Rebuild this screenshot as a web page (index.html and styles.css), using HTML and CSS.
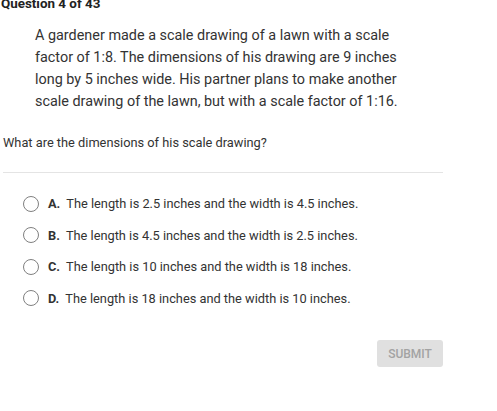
FILE: index.html
```html
<!DOCTYPE html>
<html>
<head>
<meta charset="utf-8">
<link rel="stylesheet" href="styles.css">
</head>
<body>
<div class="page">
  <div class="header">Question 4 of 43</div>
  <p class="passage">A gardener made a scale drawing of a lawn with a scale factor of 1:8. The dimensions of his drawing are 9 inches long by 5 inches wide. His partner plans to make another scale drawing of the lawn, but with a scale factor of 1:16.</p>
  <p class="question">What are the dimensions of his scale drawing?</p>
  <div class="divider"></div>
  <ul class="options">
    <li class="option"><span class="radio"></span><span class="letter">A.</span><span class="text">The length is 2.5 inches and the width is 4.5 inches.</span></li>
    <li class="option"><span class="radio"></span><span class="letter">B.</span><span class="text">The length is 4.5 inches and the width is 2.5 inches.</span></li>
    <li class="option"><span class="radio"></span><span class="letter">C.</span><span class="text">The length is 10 inches and the width is 18 inches.</span></li>
    <li class="option"><span class="radio"></span><span class="letter">D.</span><span class="text">The length is 18 inches and the width is 10 inches.</span></li>
  </ul>
  <div class="actions"><button class="submit">SUBMIT</button></div>
</div>
</body>
</html>
```
FILE: styles.css
```css
html, body {
  margin: 0;
  padding: 0;
  background: #fff;
}
body {
  font-family: Roboto, "Liberation Sans", sans-serif;
  color: #333;
}
.page {
  width: 440px;
  padding-left: 3px;
}
.header {
  font-weight: bold;
  font-size: 13.4px;
  line-height: 16px;
  margin-top: -4px;
  margin-left: -2px;
  color: #222;
}
.passage {
  margin: 13px 0 0 32px;
  width: 370px;
  font-size: 14.4px;
  line-height: 22px;
  color: #333;
}
.question {
  margin: 22px 0 0 0;
  font-size: 12.8px;
  line-height: 16px;
}
.divider {
  margin-top: 21px;
  height: 1px;
  background: #e4e4e4;
}
.options {
  list-style: none;
  margin: 15px 0 0 0;
  padding: 0 0 0 20px;
}
.option {
  display: flex;
  align-items: center;
  height: 31.5px;
  font-size: 12.8px;
}
.radio {
  width: 14px;
  height: 14px;
  border: 1.3px solid #808080;
  border-radius: 50%;
  margin-right: 9px;
  flex: none;
}
.letter {
  font-weight: bold;
  margin-right: 6px;
  color: #333;
}
.actions {
  display: flex;
  justify-content: flex-end;
  margin-top: 26px;
}
.submit {
  font-family: Roboto, "Liberation Sans", sans-serif;
  background: #e0e0e0;
  color: #a3a3a3;
  border: none;
  border-radius: 3px;
  width: 66px;
  height: 27px;
  font-size: 12px;
  font-weight: 500;
  padding: 0;
}
```
